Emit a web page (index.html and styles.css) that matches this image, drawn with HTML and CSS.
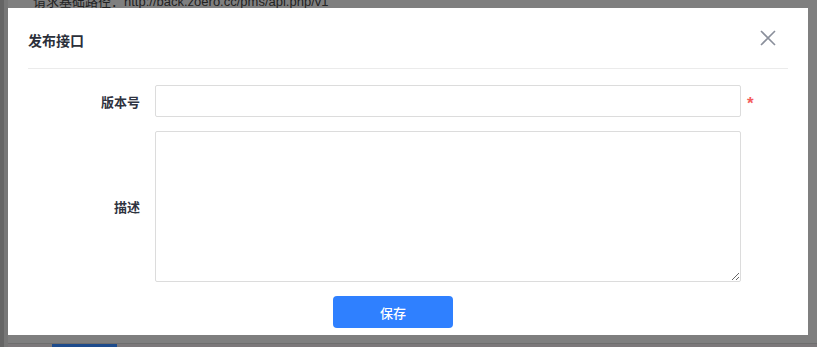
FILE: index.html
```html
<!DOCTYPE html>
<html lang="zh">
<head>
  <meta charset="UTF-8" />
  <title>发布接口</title>
  <link rel="stylesheet" href="styles.css">
</head>
<body>

<div class="page">
  <div class="rail rail-dark"></div>
  <div class="rail rail-light"></div>
  <div class="main">
    <div class="base-url">请求基础路径：http://back.zoero.cc/pms/api.php/v1</div>
    <div class="main-body"></div>
    <div class="main-footer">
      <span class="tab-active"></span>
    </div>
  </div>
</div>

<div class="dialog">
  <div class="dialog-header">
    <h2>发布接口</h2>
    <button class="btn-close" aria-label="关闭">
      <svg width="16" height="16" viewBox="0 0 16 16">
        <path d="M1 1 L15 15 M15 1 L1 15" stroke="#8a8f9b" stroke-width="1.6" fill="none" />
      </svg>
    </button>
  </div>

  <form class="dialog-form">
    <label class="form-label" for="version">版本号</label>
    <input class="form-input" id="version" type="text">
    <span class="required">*</span>

    <label class="form-label" for="desc">描述</label>
    <textarea class="form-textarea" id="desc"></textarea>
    <span></span>

    <span></span>
    <div class="form-actions">
      <button type="button" class="btn-save">保存</button>
    </div>
  </form>
</div>

</body>
</html>
```

FILE: styles.css
```css
body {
  margin: 0;
  width: 817px;
  height: 347px;
  overflow: hidden;
  position: relative;
  background-color: #7f7f7f;
  font-family: "Noto Sans CJK SC", "Noto Sans", sans-serif;
}

.page {
  display: flex;
  height: 347px;
}

.rail {
  width: 4px;
}

.rail-dark {
  background-color: #656565;
}

.rail-light {
  background-color: #777777;
}

.main {
  flex: 1;
  display: flex;
  flex-direction: column;
}

.base-url {
  margin-top: -8px;
  padding-left: 25px;
  font-size: 13px;
  line-height: 20px;
  color: #222;
  font-family: "Liberation Sans", "Noto Sans CJK SC", sans-serif;
}

.main-body {
  flex: 1;
}

.main-footer {
  height: 3px;
  border-top: 1px solid #6e6e6e;
  background-color: #7c787a;
  padding-left: 44px;
}

.tab-active {
  display: block;
  width: 65px;
  height: 3px;
  background-color: #1d4b8c;
}

/* dialog */
.dialog {
  position: absolute;
  left: 8px;
  top: 8px;
  width: 800px;
  height: 327px;
  background-color: #fff;
  box-sizing: border-box;
  padding: 0 20px;
}

.dialog-header {
  display: flex;
  justify-content: space-between;
  align-items: center;
  height: 60px;
  border-bottom: 1px solid #ebebeb;
}

.dialog-header h2 {
  margin: 0;
  font-size: 14px;
  font-weight: 700;
  color: #2b2f3a;
  padding-top: 4px;
}

.btn-close {
  border: none;
  background: none;
  padding: 0;
  margin-right: 12px;
  width: 16px;
  height: 16px;
  cursor: pointer;
}

.btn-close svg {
  display: block;
}

.dialog-form {
  display: grid;
  grid-template-columns: 112px 586px 20px;
  column-gap: 15px;
  row-gap: 14px;
  padding-top: 16px;
  align-items: center;
}

.form-label {
  text-align: right;
  font-size: 13px;
  font-weight: 700;
  color: #2f3340;
}

.form-input,
.form-textarea {
  box-sizing: border-box;
  border: 1px solid #dcdcdc;
  border-radius: 2px;
  margin: 0;
  font-family: inherit;
  font-size: 13px;
}

.form-input {
  height: 32px;
}

.form-textarea {
  height: 151px;
  resize: vertical;
  display: block;
}

.required {
  color: #f45c5c;
  font-family: "Liberation Sans", sans-serif;
  font-size: 17px;
  font-weight: 700;
  line-height: 14px;
  margin-left: -9px;
  padding-top: 6px;
}

.form-actions {
  padding-left: 178px;
}

.btn-save {
  width: 120px;
  height: 32px;
  border: none;
  border-radius: 4px;
  background-color: #2f80ff;
  color: #fff;
  font-family: inherit;
  font-size: 13px;
  font-weight: 500;
  cursor: pointer;
}
```
